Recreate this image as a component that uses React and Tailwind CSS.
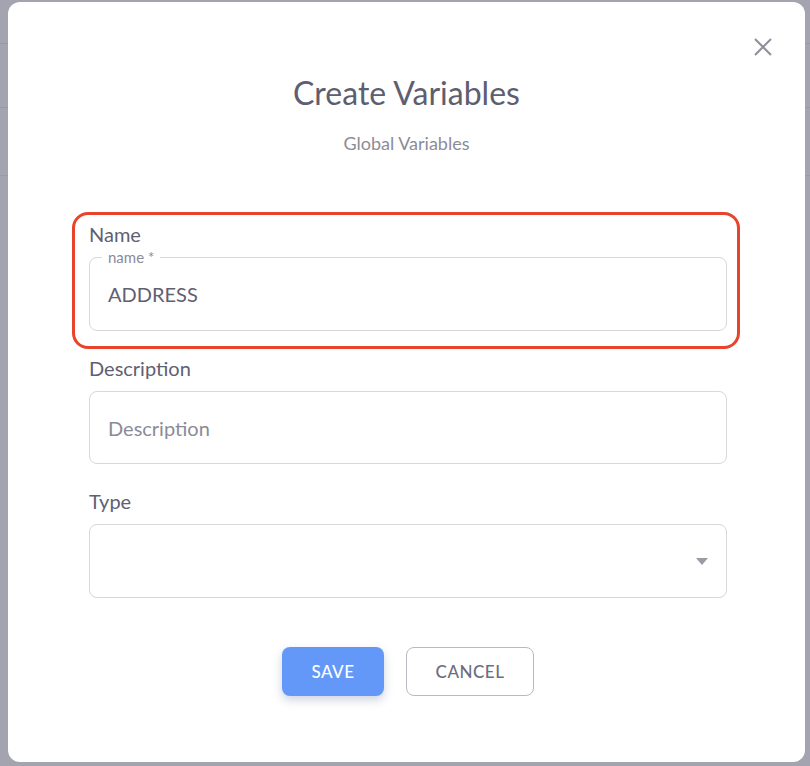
const FONT = { fontFamily: 'Lato, "Open Sans", sans-serif' };

function Label({ children }) {
  return <div className="text-[20px] leading-[24px] text-[#5f6072]">{children}</div>;
}

export default function App() {
  return (
    <div className="relative h-[766px] w-[810px] overflow-hidden bg-[#a3a4b0]" style={FONT}>
      {/* faint rows of the page behind the overlay */}
      <div className="absolute left-0 top-[43px] h-px w-full bg-[#999aa6]" />
      <div className="absolute left-0 top-[107px] h-px w-full bg-[#999aa6]" />
      <div className="absolute left-0 top-[175px] h-px w-full bg-[#999aa6]" />

      <div className="relative ml-[8px] mt-[2px] h-[760px] w-[797px] rounded-[12px] bg-white">
        <button className="absolute right-[33px] top-[36px]">
          <svg width="18" height="18" viewBox="0 0 18 18" fill="none" stroke="#8e8f9b" strokeWidth="2">
            <path d="M1 1l16 16M17 1L1 17" />
          </svg>
        </button>

        <div className="pt-[73px] text-center">
          <h1 className="text-[32px] leading-[36px] text-[#5d5e70]">Create Variables</h1>
          <p className="mt-[21px] text-[18px] leading-[22px] text-[#8b8c99]">Global Variables</p>
        </div>

        <div className="mt-[58px] pl-[64px] pr-[65px]">
          {/* highlighted field */}
          <div className="rounded-[16px] border-[3px] border-[#e9432b] pb-[15px] pl-[14px] pr-[10px] pt-[7px]">
            <Label>Name</Label>
            <div className="relative mt-[11px] h-[74px] rounded-[8px] border border-[#d7d7dc]">
              <span className="absolute -top-[10px] left-[12px] bg-white px-[6px] text-[15px] leading-[18px] text-[#8a8b97]">
                name *
              </span>
              <div className="flex h-full items-center pl-[18px] text-[20px] text-[#5f6072]">ADDRESS</div>
            </div>
          </div>

          <div className="pl-[17px] pr-[13px]">
            <div className="mt-[7px]">
              <Label>Description</Label>
            </div>
            <div className="mt-[11px] flex h-[73px] items-center rounded-[8px] border border-[#d7d7dc] pl-[18px] text-[20px] text-[#8a8b97]">
              Description
            </div>

            <div className="mt-[25px]">
              <Label>Type</Label>
            </div>
            <div className="mt-[11px] flex h-[74px] items-center justify-end rounded-[8px] border border-[#d7d7dc] pr-[18px]">
              <svg width="12" height="7" viewBox="0 0 12 7">
                <path d="M0 0h12L6 7z" fill="#9a9ba6" />
              </svg>
            </div>

            <div className="mt-[49px] flex justify-center gap-[22px]">
              <button className="h-[49px] w-[102px] rounded-[8px] bg-[#6398f9] text-[17px] font-medium tracking-[0.5px] text-white shadow-[0_4px_10px_rgba(60,80,140,0.25)]">
                SAVE
              </button>
              <button className="h-[49px] w-[128px] rounded-[8px] border border-[#b8b9c4] bg-white text-[17px] font-medium tracking-[0.5px] text-[#6b6e80]">
                CANCEL
              </button>
            </div>
          </div>
        </div>
      </div>
    </div>
  );
}
